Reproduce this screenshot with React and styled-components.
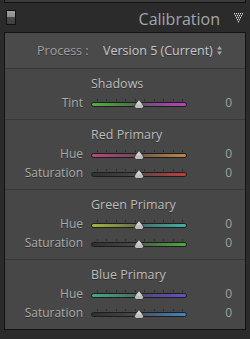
import React from "react";
import styled, { createGlobalStyle } from "styled-components";

const GlobalStyle = createGlobalStyle`
  *, *::before, *::after {
    box-sizing: border-box;
  }
  html, body {
    margin: 0;
    padding: 0;
    background: #2b2b2b;
  }
  body {
    font-family: "Open Sans", "Noto Sans", sans-serif;
  }
`;

const Frame = styled.div`
  width: 250px;
  height: 339px;
  background: #2b2b2b;
  overflow: hidden;
  display: flex;
  flex-direction: column;
`;

const TopEdge = styled.div`
  flex: none;
  height: 3px;
  margin: 0 4px;
  background: #3b3b3b;
  border: 1px solid #121212;
  border-top: none;
`;

const Header = styled.div`
  flex: none;
  height: 29px;
  display: flex;
  align-items: center;
  padding: 0 7px 0 6px;
`;

const Toggle = styled.div`
  width: 10px;
  height: 15px;
  border: 1px solid #111;
  background: linear-gradient(#a0a0a0 0, #8a8a8a 50%, #4a4a4a 50%, #3e3e3e 100%);
`;

const Title = styled.div`
  flex: 1;
  text-align: right;
  font-size: 16px;
  color: #a2a7ac;
  padding: 3px 14px 0 0;
  line-height: 20px;
`;

const Panel = styled.div`
  flex: none;
  margin: 0 4px;
  border: 1px solid #141414;
  background: #474747;
`;

const ProcessRow = styled.div`
  height: 36px;
  display: flex;
  align-items: center;
  padding-left: 32px;
  border-bottom: 1px solid #393939;
  background: #4a4a4a;
  font-size: 12.5px;
`;

const ProcessLabel = styled.span`
  color: #a0a0a0;
  width: 66px;
  text-shadow: 0 1px 0 #333;
`;

const ProcessValue = styled.span`
  color: #c6cacf;
  text-shadow: 0 1px 0 #333;
`;

const Arrows = styled.span`
  display: inline-flex;
  margin-left: 4px;
`;

const Section = styled.div`
  padding: 6px 0 7px;
  border-top: ${(p) => (p.$first ? "none" : "1px solid #393939")};
`;

const Grid = styled.div`
  display: grid;
  grid-template-columns: 78px 96px 1fr;
  column-gap: 8px;
  padding-right: 13px;
  font-size: 12px;
`;

const Heading = styled.div`
  grid-column: 2 / 4;
  height: 18px;
  line-height: 17px;
  padding-bottom: 1px;
  color: #bdbdbd;
  font-size: 12.5px;
  text-shadow: 0 1px 0 #2e2e2e;
`;

const Label = styled.div`
  height: 19px;
  line-height: 19px;
  text-align: right;
  color: #acacac;
  text-shadow: 0 1px 0 #2e2e2e;
`;

const Value = styled.div`
  height: 19px;
  line-height: 19px;
  text-align: right;
  color: #a2a2a2;
`;

const Slider = styled.div`
  position: relative;
  height: 19px;
  display: flex;
  flex-direction: column;
  justify-content: center;
  padding-top: 1px;
`;

const Ticks = styled.div`
  height: 2px;
  margin: 0 4px 1px 6px;
  display: flex;
  justify-content: space-between;
`;

const Tick = styled.span`
  width: 1px;
  height: 2px;
  background: #2c2c2c;
`;

const Track = styled.div`
  height: 5px;
  border: 1px solid #1d1d1d;
  border-radius: 3px;
  background: ${(p) => p.$bg};
`;

const Thumb = styled.svg`
  position: absolute;
  left: 43px;
  top: 6px;
`;

const gray = "#585858";
const tracks = {
  tint: `linear-gradient(90deg, #4fb043, #4a7445 45%, ${gray} 50%, #74507a 55%, #b443bf)`,
  redHue: `linear-gradient(90deg, #bc4580, #74485c 45%, ${gray} 50%, #746048 55%, #bf8545)`,
  redSat: `linear-gradient(90deg, #303030, #4a4343 45%, #664646 55%, #c03e3e)`,
  greenHue: `linear-gradient(90deg, #a5b53c, #6a7448 45%, ${gray} 50%, #487470 55%, #3cb3a5)`,
  greenSat: `linear-gradient(90deg, #303030, #434a43 45%, #4a6646 55%, #4caa3e)`,
  blueHue: `linear-gradient(90deg, #3eac86, #487266 45%, ${gray} 50%, #534a7a 55%, #6a4ec6)`,
  blueSat: `linear-gradient(90deg, #303030, #43474a 45%, #465866 55%, #3f86c2)`,
};

const sections = [
  { title: "Shadows", rows: [["Tint", "tint"]] },
  { title: "Red Primary", rows: [["Hue", "redHue"], ["Saturation", "redSat"]] },
  { title: "Green Primary", rows: [["Hue", "greenHue"], ["Saturation", "greenSat"]] },
  { title: "Blue Primary", rows: [["Hue", "blueHue"], ["Saturation", "blueSat"]] },
];

const SliderBar = ({ bg }) => (
  <Slider>
    <Ticks>
      {Array.from({ length: 10 }).map((_, i) => (
        <Tick key={i} />
      ))}
    </Ticks>
    <Track $bg={bg} />
    <Thumb width="10" height="10" viewBox="0 0 10 10">
      <path
        d="M5 0.5 L8.5 5 Q9.5 6.2 9.5 7.5 Q9.5 9.5 7.5 9.5 L2.5 9.5 Q0.5 9.5 0.5 7.5 Q0.5 6.2 1.5 5 Z"
        fill="#bdbdbd"
        stroke="#2a2a2a"
        strokeWidth="0.8"
      />
      <path d="M5 1.5 L8 5.5 L2 5.5 Z" fill="#d2d2d2" />
    </Thumb>
  </Slider>
);

// dotted triangle used by Lightroom panel headers
const CollapseIcon = () => (
  <svg width="9" height="10" viewBox="0 0 9 10">
    {[
      [0, 0], [2, 0], [4, 0], [6, 0], [8, 0],
      [1, 2], [3, 2], [5, 2], [7, 2],
      [2, 4], [4, 4], [6, 4],
      [3, 6], [5, 6],
      [4, 8],
    ].map(([x, y], i) => (
      <rect key={i} x={x} y={y} width="1" height="1.4" fill="#dcdcdc" />
    ))}
  </svg>
);

export default function App() {
  return (
    <Frame>
      <GlobalStyle />
      <TopEdge />
      <Header>
        <Toggle />
        <Title>Calibration</Title>
        <CollapseIcon />
      </Header>
      <Panel>
        <ProcessRow>
          <ProcessLabel>Process :</ProcessLabel>
          <ProcessValue>Version 5 (Current)</ProcessValue>
          <Arrows>
            <svg width="5" height="9" viewBox="0 0 5 9">
              <path d="M2.5 0 L5 3.5 L0 3.5 Z M2.5 9 L5 5.5 L0 5.5 Z" fill="#a8a8a8" />
            </svg>
          </Arrows>
        </ProcessRow>
        {sections.map((s, i) => (
          <Section key={s.title} $first={i === 0}>
            <Grid>
              <Heading>{s.title}</Heading>
              {s.rows.map(([label, key]) => (
                <React.Fragment key={key}>
                  <Label>{label}</Label>
                  <SliderBar bg={tracks[key]} />
                  <Value>0</Value>
                </React.Fragment>
              ))}
            </Grid>
          </Section>
        ))}
      </Panel>
    </Frame>
  );
}
